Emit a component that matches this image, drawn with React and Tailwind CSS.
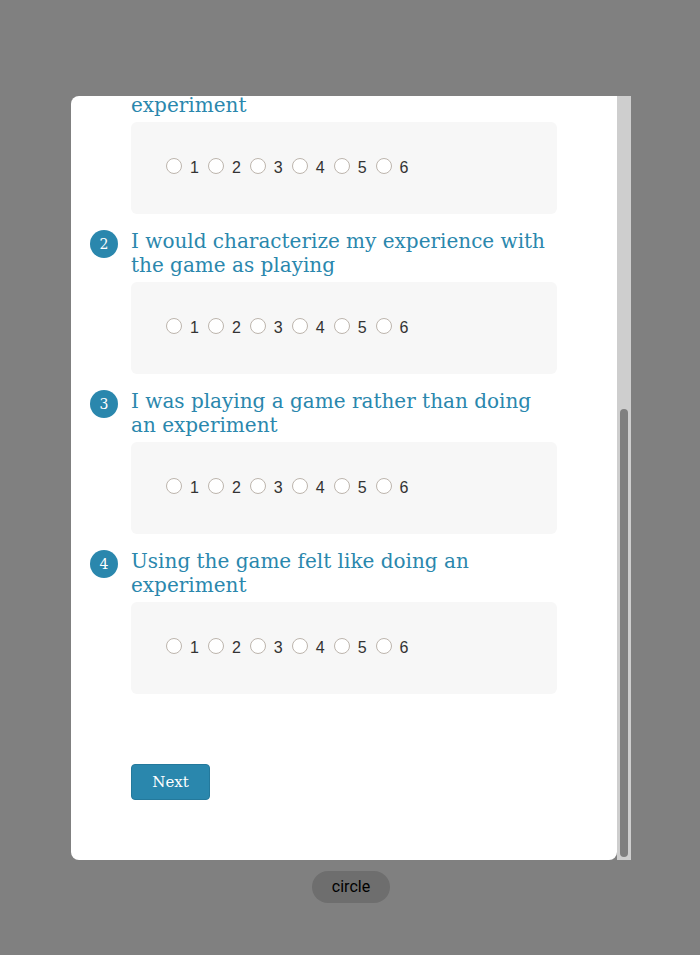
import React from "react";

const serif = { fontFamily: '"DejaVu Serif", serif' };

function Options({ first }) {
  return (
    <div
      className={`ml-[41px] h-[92px] w-[426px] rounded-md bg-[#f7f7f7] pl-[35px] pt-[31px] ${first ? "mt-[8px]" : "mt-[5px]"}`}
    >
      <div className="flex items-center" style={{ fontFamily: '"Liberation Sans", Arial, sans-serif' }}>
        {[1, 2, 3, 4, 5, 6].map((n) => (
          <div key={n} className="mr-[9px] flex items-center">
            <span className="box-border h-4 w-4 rounded-full border border-[#bdb5ad] bg-white" />
            <span className="ml-[8px] mt-[5px] text-[16px] leading-5 text-[#333]">{n}</span>
          </div>
        ))}
      </div>
    </div>
  );
}

function Question({ n, lines, first }) {
  return (
    <div className="mb-[15px]">
      <div className="flex items-start">
        <div className="flex w-[41px] shrink-0 justify-start">
          {n ? (
            <div
              className="mt-[1px] flex h-7 w-7 items-center justify-center rounded-full bg-[#2a87ad] text-[14px] text-white"
              style={serif}
            >
              {n}
            </div>
          ) : null}
        </div>
        <div className={`text-[20px] text-[#2a87ad] ${first ? "leading-[18px]" : "leading-6"}`} style={serif}>
          {lines.map((l, i) => (
            <div key={i}>{l}</div>
          ))}
        </div>
      </div>
      <Options first={first} />
    </div>
  );
}

export default function App() {
  return (
    <div className="relative h-[955px] w-[700px] overflow-hidden bg-[#808080]">
      <div className="flex pt-[96px] pl-[71px]">
        <div className="relative h-[764px] w-[546px] overflow-hidden rounded-l-lg rounded-br-lg bg-white">
          <div className="pl-[19px]">
            <Question n={null} lines={["experiment"]} first />
            <Question n={2} lines={["I would characterize my experience with", "the game as playing"]} />
            <Question n={3} lines={["I was playing a game rather than doing", "an experiment"]} />
            <Question n={4} lines={["Using the game felt like doing an", "experiment"]} />
            <div className="ml-[41px] mt-[70px]">
              <button
                className="h-9 w-[79px] rounded border border-[#24799c] bg-[#2a87ad] text-[15px] text-white"
                style={serif}
              >
                Next
              </button>
            </div>
          </div>
        </div>
        <div className="relative h-[764px] w-[14px] bg-[#cecece]">
          <div className="absolute left-[3px] top-[313px] h-[448px] w-[8px] rounded-full bg-[#7f7f7f]" />
        </div>
      </div>
      <div className="mt-[11px] flex pl-[312px]">
        <div
          className="flex h-8 w-[78px] items-center justify-center rounded-2xl bg-[#6e6e6e] text-[16px] text-black"
          style={{ fontFamily: "Roboto, sans-serif" }}
        >
          circle
        </div>
      </div>
    </div>
  );
}
